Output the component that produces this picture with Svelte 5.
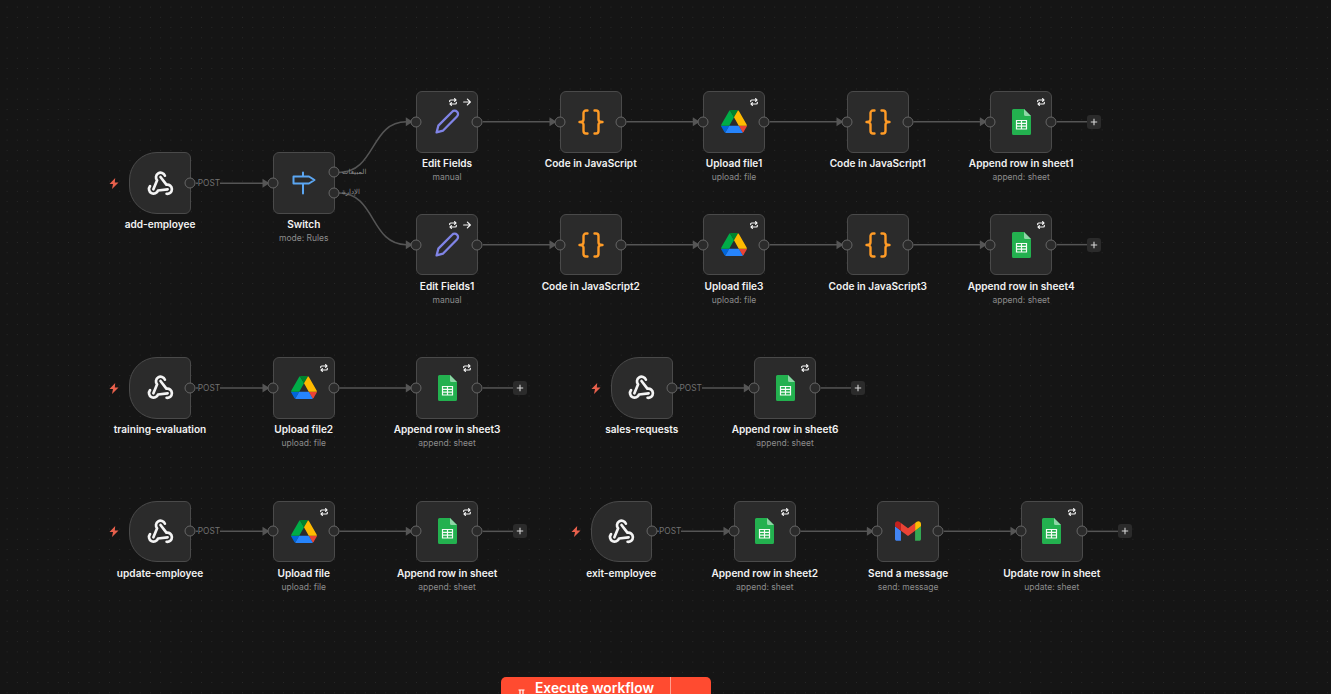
<script lang="ts">
  type Kind = "webhook" | "switch" | "edit" | "code" | "drive" | "sheet" | "gmail";

  interface Node {
    id: string;
    name: string;
    sub?: string;
    kind: Kind;
    x: number;
    y: number;
    badges?: string[];
    tail?: boolean;
  }

  // canvas rows and columns, the workflow is zoomed out so they land on fractions
  const R1 = 91;
  const R0 = 152.4;
  const R2 = 213.9;
  const R3 = 357.2;
  const R4 = 500.6;

  const nodes: Node[] = [
    { id: "w1", name: "add-employee", kind: "webhook", x: 129.3, y: R0 },
    { id: "sw", name: "Switch", sub: "mode: Rules", kind: "switch", x: 273, y: R0 },
    { id: "e1", name: "Edit Fields", sub: "manual", kind: "edit", x: 416.3, y: R1, badges: ["loop", "arrow"] },
    { id: "c1", name: "Code in JavaScript", kind: "code", x: 560, y: R1 },
    { id: "d1", name: "Upload file1", sub: "upload: file", kind: "drive", x: 703.3, y: R1, badges: ["loop"] },
    { id: "c2", name: "Code in JavaScript1", kind: "code", x: 847, y: R1 },
    { id: "s1", name: "Append row in sheet1", sub: "append: sheet", kind: "sheet", x: 990.4, y: R1, badges: ["loop"], tail: true },
    { id: "e2", name: "Edit Fields1", sub: "manual", kind: "edit", x: 416.3, y: R2, badges: ["loop", "arrow"] },
    { id: "c3", name: "Code in JavaScript2", kind: "code", x: 560, y: R2 },
    { id: "d2", name: "Upload file3", sub: "upload: file", kind: "drive", x: 703.3, y: R2, badges: ["loop"] },
    { id: "c4", name: "Code in JavaScript3", kind: "code", x: 847, y: R2 },
    { id: "s2", name: "Append row in sheet4", sub: "append: sheet", kind: "sheet", x: 990.4, y: R2, badges: ["loop"], tail: true },
    { id: "w2", name: "training-evaluation", kind: "webhook", x: 129.3, y: R3 },
    { id: "d3", name: "Upload file2", sub: "upload: file", kind: "drive", x: 273, y: R3, badges: ["loop"] },
    { id: "s3", name: "Append row in sheet3", sub: "append: sheet", kind: "sheet", x: 416.3, y: R3, badges: ["loop"], tail: true },
    { id: "w3", name: "sales-requests", kind: "webhook", x: 611, y: R3 },
    { id: "s4", name: "Append row in sheet6", sub: "append: sheet", kind: "sheet", x: 754.3, y: R3, badges: ["loop"], tail: true },
    { id: "w4", name: "update-employee", kind: "webhook", x: 129.3, y: R4 },
    { id: "d4", name: "Upload file", sub: "upload: file", kind: "drive", x: 273, y: R4, badges: ["loop"] },
    { id: "s5", name: "Append row in sheet", sub: "append: sheet", kind: "sheet", x: 416.3, y: R4, badges: ["loop"], tail: true },
    { id: "w5", name: "exit-employee", kind: "webhook", x: 590.5, y: R4 },
    { id: "s6", name: "Append row in sheet2", sub: "append: sheet", kind: "sheet", x: 734, y: R4, badges: ["loop"] },
    { id: "g1", name: "Send a message", sub: "send: message", kind: "gmail", x: 877.4, y: R4 },
    { id: "s7", name: "Update row in sheet", sub: "update: sheet", kind: "sheet", x: 1021, y: R4, badges: ["loop"], tail: true }
  ];

  const links = [
    ["w1", "sw"], ["e1", "c1"], ["c1", "d1"], ["d1", "c2"], ["c2", "s1"],
    ["e2", "c3"], ["c3", "d2"], ["d2", "c4"], ["c4", "s2"],
    ["w2", "d3"], ["d3", "s3"], ["w3", "s4"],
    ["w4", "d4"], ["d4", "s5"], ["w5", "s6"], ["s6", "g1"], ["g1", "s7"]
  ];

  const byId = Object.fromEntries(nodes.map((n) => [n.id, n]));
  const SIZE = 61.5;
  const mid = SIZE / 2;

  const straight = links.map(([a, b]) => {
    const from = byId[a];
    const to = byId[b];
    return { x1: from.x + SIZE + 5, x2: to.x - 10, y: from.y + mid };
  });

  const tails = nodes.filter((n) => n.tail);
  const triggers = nodes.filter((n) => n.kind === "webhook");

  const curves = [
    { d: "M339 172.4C376 172.4 370 121.75 406.3 121.75", y: 121.75, x: 406.3 },
    { d: "M339 193C376 193 370 244.65 406.3 244.65", y: 244.65, x: 406.3 }
  ];
  const targets = [...straight.map((s) => ({ x: s.x2, y: s.y })), ...curves];

  const hook = "M5.68 17.15L9 9.2A4.1 4.1 0 1 1 15.9 5";
</script>

<main class="canvas">
  <svg class="edges" width="1331" height="694" viewBox="0 0 1331 694">
    {#each straight as s}
      <path d={`M${s.x1} ${s.y}H${s.x2}`} />
    {/each}
    {#each curves as c}
      <path d={c.d} />
    {/each}
    {#each tails as n}
      <path d={`M${n.x + SIZE + 5} ${n.y + mid}H${n.x + 97}`} />
    {/each}
    {#each targets as t}
      <polygon points={`${t.x - 0.5} ${t.y - 4.5} ${t.x + 6.5} ${t.y} ${t.x - 0.5} ${t.y + 4.5}`} />
    {/each}
  </svg>

  {#each triggers as n}
    <svg class="bolt" style={`left:${n.x - 20}px;top:${n.y + 25.5}px`} width="10" height="11" viewBox="0 0 10 11">
      <path d="M6.2 0L.5 6H4L3 11l6.5-6.400H5.800z" fill="#e8604c" />
    </svg>
    <span class="edge-label post" style={`left:${n.x + 68.5}px;top:${n.y + mid}px`}>POST</span>
  {/each}

  <span class="edge-label rule" style="left:342px;top:172px">المبيعات</span>
  <span class="edge-label rule" style="left:342px;top:192px">الإدارة</span>

  {#each nodes as n}
    <div class="node" class:trigger={n.kind === "webhook"} style={`left:${n.x}px;top:${n.y}px`}>
      <div class="box">
        {#if n.badges}
          <div class="badges">
            {#each n.badges as b}
              {#if b === "loop"}
                <svg width="8" height="8" viewBox="0 0 12 12" class="badge">
                  <path d="M1 5.4V4.6a1.6 1.6 0 0 1 1.6-1.6H10M8.4 1L10.4 3 8.4 5M11 6.6v.8A1.6 1.6 0 0 1 9.4 9H2M3.6 7L1.6 9l2 2" />
                </svg>
              {:else}
                <svg width="8" height="8" viewBox="0 0 12 12" class="badge">
                  <path d="M1 6h10M6.6 1.6L11 6l-4.4 4.4" />
                </svg>
              {/if}
            {/each}
          </div>
        {/if}

        {#if n.kind === "webhook"}
          <svg class="icon" width="27" height="27" viewBox="0 0 24 24" fill="none" stroke="#f4f4f4" stroke-width="2.4" stroke-linecap="round" stroke-linejoin="round">
            <path d={hook} />
            <path d={hook} transform="rotate(120 12 13.5)" />
            <path d={hook} transform="rotate(240 12 13.5)" />
          </svg>
        {:else if n.kind === "switch"}
          <svg class="icon" width="24" height="24" viewBox="0 0 24 24" fill="none" stroke="#5ba6f2" stroke-width="2" stroke-linejoin="round" stroke-linecap="round">
            <path d="M1.5 5.5h15.5l5.5 3.5-5.5 3.5H1.5zM11 1.5v4M11 12.5v10" />
          </svg>
        {:else if n.kind === "edit"}
          <svg class="icon" width="25" height="25" viewBox="0 0 24 24" fill="none" stroke="#8084e6" stroke-width="2.2" stroke-linejoin="round">
            <path d="M1.5 22.5L3.2 16 16.5 2.6a3.1 3.1 0 0 1 4.6 0 3.1 3.1 0 0 1 0 4.6L7.8 20.7z" />
          </svg>
        {:else if n.kind === "code"}
          <svg class="icon" width="26" height="26" viewBox="0 0 26 26" fill="none" stroke="#ff9b26" stroke-width="2.4" stroke-linecap="round" stroke-linejoin="round">
            <path d="M9.5 1.5H8A2.5 2.5 0 0 0 5.5 4v6.4C5.5 12 4 13 1.5 13 4 13 5.5 14 5.5 15.6V22A2.5 2.5 0 0 0 8 24.5h1.5" />
            <path d="M16.5 1.5H18A2.5 2.5 0 0 1 20.5 4v6.4c0 1.6 1.5 2.6 4 2.6-2.5 0-4 1-4 2.6V22a2.5 2.5 0 0 1-2.5 2.5h-1.5" />
          </svg>
        {:else if n.kind === "drive"}
          <svg class="icon" width="26" height="23" viewBox="0 0 87.3 78">
            <path d="m6.6 66.85 3.85 6.65c.8 1.4 1.95 2.5 3.3 3.3l13.75-23.8h-27.5c0 1.55.4 3.1 1.2 4.5z" fill="#0066da" />
            <path d="m43.65 25-13.75-23.8c-1.35.8-2.5 1.9-3.3 3.3l-25.4 44a9.06 9.06 0 0 0 -1.2 4.5h27.5z" fill="#00ac47" />
            <path d="m73.55 76.8c1.35-.8 2.5-1.9 3.3-3.3l1.6-2.75 7.65-13.25c.8-1.4 1.2-2.95 1.2-4.5h-27.502l5.852 11.5z" fill="#ea4335" />
            <path d="m43.65 25 13.75-23.8c-1.35-.8-2.9-1.2-4.5-1.2h-18.5c-1.6 0-3.15.45-4.5 1.2z" fill="#00832d" />
            <path d="m59.8 53h-32.3l-13.75 23.8c1.35.8 2.9 1.2 4.5 1.2h50.8c1.6 0 3.15-.45 4.5-1.2z" fill="#2684fc" />
            <path d="m73.4 26.5-12.7-22c-.8-1.4-1.95-2.5-3.3-3.3l-13.75 23.8 16.15 28h27.45c0-1.55-.4-3.1-1.2-4.5z" fill="#ffba00" />
          </svg>
        {:else if n.kind === "sheet"}
          <svg class="icon" width="19" height="26" viewBox="0 0 19 26">
            <path d="M1.5 0H12l7 7v17.5a1.5 1.5 0 0 1-1.5 1.5h-16A1.5 1.5 0 0 1 0 24.5V1.5A1.5 1.5 0 0 1 1.5 0z" fill="#23b14f" />
            <path d="M12 0l7 7h-5.5A1.5 1.5 0 0 1 12 5.5z" fill="#8ed6a6" />
            <path d="M4.5 11.5h10v8.5h-10zM4.5 14.3h10M4.5 17.1h10M9.5 11.5v8.5" fill="none" stroke="#f4fbf6" stroke-width="1.2" />
          </svg>
        {:else if n.kind === "gmail"}
          <svg class="icon" width="26" height="20" viewBox="52 42 88 66">
            <path fill="#4285f4" d="M58 108h14V74L52 59v43c0 3.32 2.69 6 6 6" />
            <path fill="#34a853" d="M120 108h14c3.32 0 6-2.69 6-6V59l-20 15" />
            <path fill="#fbbc04" d="M120 48v26l20-15v-8c0-7.42-8.47-11.65-14.4-7.2" />
            <path fill="#ea4335" d="M72 74V48l24 18 24-18v26L96 92" />
            <path fill="#c5221f" d="M52 51v8l20 15V48l-5.6-4.2c-5.94-4.45-14.4-.22-14.4 7.2" />
          </svg>
        {/if}

        {#if n.kind !== "webhook"}
          <span class="port in"></span>
        {/if}
        {#if n.kind === "switch"}
          <span class="port out first"></span>
          <span class="port out second"></span>
        {:else}
          <span class="port out"></span>
        {/if}
      </div>
      <div class="caption">
        <div class="name">{n.name}</div>
        {#if n.sub}<div class="sub">{n.sub}</div>{/if}
      </div>
      {#if n.tail}
        <span class="plus">
          <svg width="8" height="8" viewBox="0 0 8 8"><path d="M4 .8v6.4M.8 4h6.4" stroke="#d6d6d6" stroke-width="1.1" /></svg>
        </span>
      {/if}
    </div>
  {/each}

  <div class="run">
    <button class="exec">
      <svg width="11" height="5" viewBox="0 0 11 5" fill="none" stroke="#fff" stroke-width="1.2">
        <path d="M2.5 1h6M4 1v4M7 1v4" />
      </svg>
      <span>Execute workflow</span>
    </button>
    <button class="more" aria-label="more"></button>
  </div>
</main>

<style>
  :global(body) {
    margin: 0;
    background: #151515;
    overflow: hidden;
  }

  .canvas {
    position: relative;
    width: 1331px;
    height: 694px;
    overflow: hidden;
    font-family: Inter, "Noto Sans", sans-serif;
    background-color: #151515;
    background-image: radial-gradient(circle, #2a2a2a 0.55px, transparent 0.8px);
    background-size: 10.24px 10.24px;
    background-position: 2px 2px;
  }

  .edges {
    position: absolute;
    inset: 0;
  }

  .edges path {
    fill: none;
    stroke: #555;
    stroke-width: 1.5;
  }

  .edges polygon {
    fill: #555;
  }

  .bolt {
    position: absolute;
  }

  .edge-label {
    position: absolute;
    transform: translateY(-50%);
    color: #727272;
    font-size: 8.3px;
    line-height: 10px;
    background: #151515;
  }

  .rule {
    font-family: "DejaVu Sans", sans-serif;
    font-size: 7px;
    color: #8a8a8a;
    background: transparent;
  }

  .node {
    position: absolute;
    width: 61.5px;
  }

  .box {
    position: relative;
    display: flex;
    align-items: center;
    justify-content: center;
    width: 61.5px;
    height: 61.5px;
    box-sizing: border-box;
    background: #2b2b2b;
    border: 1px solid #4a4a4a;
    border-radius: 6px;
  }

  .trigger .box {
    border-radius: 28px 6px 6px 28px;
  }

  .badges {
    position: absolute;
    top: 6px;
    right: 6px;
    display: flex;
    gap: 6px;
  }

  .badge {
    fill: none;
    stroke: #f5f5f5;
    stroke-width: 1.8;
    stroke-linecap: round;
    stroke-linejoin: round;
  }

  .port {
    position: absolute;
    top: 50%;
    width: 11px;
    height: 11px;
    box-sizing: border-box;
    background: #2b2b2b;
    border: 1px solid #666;
    border-radius: 50%;
    transform: translate(-50%, -50%);
  }

  .port.in {
    left: -1px;
  }

  .port.out {
    left: calc(100% + 0.5px);
  }

  .port.first {
    top: 19px;
  }

  .port.second {
    top: 39.6px;
  }

  .caption {
    position: absolute;
    top: 66px;
    left: 50%;
    transform: translateX(-50%);
    text-align: center;
    white-space: nowrap;
  }

  .name {
    color: #f2f2f2;
    font-size: 10.1px;
    font-weight: 600;
    line-height: 13px;
  }

  .sub {
    margin-top: 2px;
    color: #8c8c8c;
    font-size: 8.5px;
    line-height: 11px;
  }

  .plus {
    position: absolute;
    left: 97px;
    top: 23.7px;
    display: flex;
    align-items: center;
    justify-content: center;
    width: 14px;
    height: 14px;
    background: #2b2b2b;
    border-radius: 3px;
  }

  /* the page cuts this bar off, only its top 17px are on screen */
  .run {
    position: absolute;
    left: 501px;
    top: 677px;
    display: flex;
    width: 210px;
    height: 17px;
    border-radius: 5px 5px 0 0;
    overflow: hidden;
    background: #ff4b30;
  }

  .exec,
  .more {
    border: 0;
    background: transparent;
    padding: 0;
    color: #fff;
    font: inherit;
  }

  .exec {
    display: flex;
    align-items: flex-start;
    width: 170px;
    padding: 5px 0 0 15px;
    box-sizing: border-box;
    border-right: 1px solid #ffa08f;
    font-size: 13.8px;
    font-weight: 600;
    line-height: 12px;
  }

  .exec svg {
    margin-top: 7px;
    margin-right: 8px;
  }

  .more {
    flex: 1;
  }
</style>
